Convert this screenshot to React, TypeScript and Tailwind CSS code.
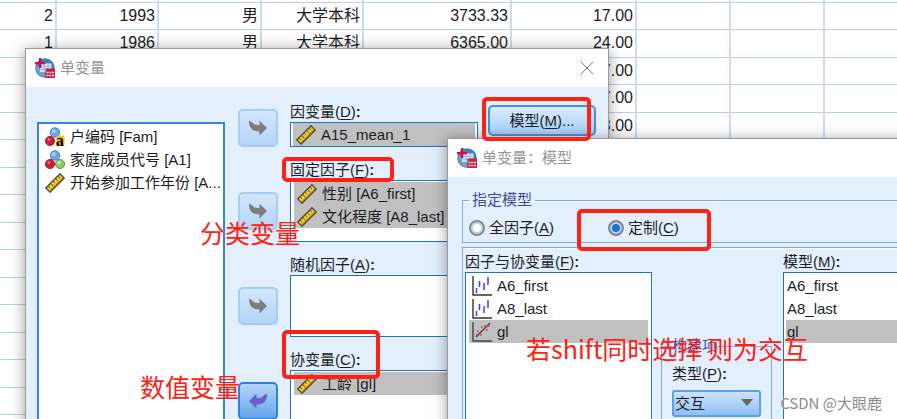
import { useState } from "react";
import type { ReactNode } from "react";

type IconName = "nominalText" | "nominal" | "scale" | "factor" | "covariate";
type Item = { icon?: IconName; label: string; selected?: boolean };

const rows: string[][] = [
  ["", "", "", "", "", ""],
  ["2", "1993", "男", "大学本科", "3733.33", "17.00"],
  ["1", "1986", "男", "大学本科", "6365.00", "24.00"],
  ["", "", "", "", "", "27.00"],
  ["", "", "", "", "", "27.00"],
  ["", "", "", "", "", "28.00"],
  ...Array.from({ length: 12 }, () => ["", "", "", "", "", ""]),
];

const variables: Item[] = [
  { icon: "nominalText", label: "户编码 [Fam]" },
  { icon: "nominal", label: "家庭成员代号 [A1]" },
  { icon: "scale", label: "开始参加工作年份 [A..." },
];

const fixedFactors: Item[] = [
  { icon: "scale", label: "性别 [A6_first]", selected: true },
  { icon: "scale", label: "文化程度 [A8_last]", selected: true },
];

const sources: Item[] = [
  { icon: "factor", label: "A6_first" },
  { icon: "factor", label: "A8_last" },
  { icon: "covariate", label: "gl", selected: true },
];

const modelTerms: Item[] = [{ label: "A6_first" }, { label: "A8_last" }, { label: "gl", selected: true }];

function VarIcon({ name }: { name: IconName }) {
  if (name === "scale") {
    return (
      <svg viewBox="0 0 20 20" className="size-5 shrink-0" aria-hidden="true">
        <g transform="rotate(-45 10 10)">
          <rect x="0" y="7" width="20" height="6" fill="#f6cf2c" stroke="#4a473c" strokeWidth="1.3" />
          <path d="M0.500 12h19" stroke="#a87f18" strokeWidth="1" />
          <path d="M3 7.500v2.500M6.500 7.500v3.500M10 7.500v2.500M13.500 7.500v3.500M17 7.500v2.500" stroke="#6b5d2c" strokeWidth="1" />
        </g>
      </svg>
    );
  }
  if (name === "factor") {
    return (
      <svg viewBox="0 0 20 20" className="size-5 shrink-0" aria-hidden="true">
        <path d="M1 0v19h19" fill="none" stroke="#333" strokeWidth="1.4" />
        <path d="M4.5 12v5M7.5 5v6M12 7v7M16 1v8" stroke="#3b3bff" strokeWidth="1.5" />
      </svg>
    );
  }
  if (name === "covariate") {
    return (
      <svg viewBox="0 0 20 20" className="size-5 shrink-0" aria-hidden="true">
        <path d="M1 0v19h19" fill="none" stroke="#444" strokeWidth="1.4" />
        <path d="M4 15 18 1" stroke="#444" strokeWidth="1.4" />
        <path d="M5 9h1.6M9 5h1.6M8 13h1.6M14 8h1.6M12 4h1.6M4 13h1.6M16 4h1.6" stroke="#e33" strokeWidth="1.6" />
      </svg>
    );
  }
  return (
    <svg viewBox="0 0 20 20" className="size-5 shrink-0" aria-hidden="true">
      <circle cx="10" cy="5.5" r="4.8" fill="#6aa5e6" stroke="#3a76bd" strokeWidth="0.8" />
      <circle cx="8.8" cy="4.2" r="2" fill="#a9cef5" />
      <circle cx="5" cy="14" r="4.6" fill="#cf1b36" stroke="#8e1024" strokeWidth="0.8" />
      <circle cx="3.9" cy="12.6" r="1.5" fill="#e8677a" />
      {name === "nominal" ? (
        <>
          <circle cx="15" cy="14" r="4.6" fill="#8ac868" stroke="#4b8f35" strokeWidth="0.8" />
          <circle cx="14" cy="12.8" r="1.8" fill="#c2e6ad" />
        </>
      ) : (
        <>
          <rect x="11.5" y="8.5" width="8" height="10.5" rx="1.5" fill="#f2c418" />
          <text x="10.8" y="18.6" fontSize="16" fontWeight="700" fontFamily="Liberation Serif, serif" fill="#000">
            a
          </text>
        </>
      )}
    </svg>
  );
}

function AppIcon() {
  return (
    <svg viewBox="0 0 20 20" className="size-5 shrink-0" aria-hidden="true">
      <circle cx="10" cy="10" r="9.8" fill="#3f7fbd" />
      <path d="M1.500 8A9.8 9.8 0 0 0 10 19.800V8z" fill="#6ba1d3" />
      <path d="M5 5.500h11.500V14H5z" fill="#d9e9f7" />
      <path d="M5 8.300h11.500M5 11.200h11.500M9 5.500V14M13 5.500V14" stroke="#7fafd9" strokeWidth="0.8" />
      <path d="M3.900 0h2.400v3.900h3.800v2.300H6.300V10H3.900V6.200H0V3.900h3.900z" fill="#d3103a" />
      <rect x="10.500" y="10.500" width="9.500" height="9.500" fill="#c8203f" />
      <path d="M11.500 14.500h7.500M11.500 17.500h7.500" stroke="#fbdfe4" strokeWidth="1.500" strokeDasharray="2 0.750" />
    </svg>
  );
}

function DataGrid() {
  return (
    <table className="w-full table-fixed border-collapse text-base leading-5 text-[#1c1c24]">
      <colgroup>
        <col className="w-[56px]" />
        <col className="w-[102px]" />
        <col className="w-[103px]" />
        <col className="w-[102px]" />
        <col className="w-[148px]" />
        <col className="w-[125px]" />
        <col className="w-[94px]" />
        <col className="w-[94px]" />
        <col />
      </colgroup>
      <tbody>
        {rows.map((row, r) => (
          <tr key={r} className="h-[28px] border-b border-[#b5cfea] first:h-[2px] even:h-[27px]">
            {[...row, "", "", ""].map((cell, c) => (
              <td key={c} className="border-r-2 border-[#cadef2] p-0 pr-[2px] text-right whitespace-nowrap last:border-r-0">
                {cell}
              </td>
            ))}
          </tr>
        ))}
      </tbody>
    </table>
  );
}

function TitleBar({ title, closable }: { title: string; closable?: boolean }) {
  return (
    <header className="flex h-[38px] shrink-0 items-center gap-[5px] bg-white pr-[14px] pl-[9px]">
      <AppIcon />
      <h2 className="flex-1 text-[15px] leading-5 text-[#969696]">{title}</h2>
      {closable && (
        <button type="button" aria-label="关闭" className="text-[#777]">
          <svg viewBox="0 0 14 14" className="size-[14px]" fill="none" stroke="currentColor" strokeWidth="1">
            <path d="M1 1l12 12M13 1 1 13" />
          </svg>
        </button>
      )}
    </header>
  );
}

function Caption({ text, hotkey, colon = true }: { text: string; hotkey: string; colon?: boolean }) {
  return (
    <span className="whitespace-nowrap">
      {text}(<u className="underline-offset-2">{hotkey}</u>){colon && <b>:</b>}
    </span>
  );
}

function ItemRow({ item }: { item: Item }) {
  return (
    <li
      role="option"
      aria-selected={!!item.selected}
      className={`flex h-[23px] items-center gap-[5px] whitespace-nowrap ${item.icon ? "pl-[3px]" : "pl-px"} ${
        item.selected ? "bg-[#c0c0c0]" : ""
      }`}
    >
      {item.icon && <VarIcon name={item.icon} />}
      <span>{item.label}</span>
    </li>
  );
}

function MoveButton({ back, label }: { back?: boolean; label: string }) {
  return (
    <button
      type="button"
      aria-label={label}
      className={`flex h-[38px] w-10 shrink-0 items-center justify-center rounded-[5px] border-2 ${
        back
          ? "border-[#2a84d8] bg-gradient-to-b from-[#b5d6fa] to-[#63a5ea] text-[#6560cc]"
          : "border-[#a5cdf3] bg-gradient-to-b from-[#d3e6fc] to-[#b4d5f8] text-[#7d7d7d]"
      }`}
    >
      <svg viewBox="0 0 18 16" className={`h-4 w-[18px] ${back ? "-scale-x-100" : ""}`} fill="currentColor">
        <path d="M0 0.500 4 3c1 1.500 2.500 2 6.500 2V0.500L18 8l-7.500 7.500V11.500C4 11.500 0 9 0 0.500z" />
      </svg>
    </button>
  );
}

type FieldProps = { id: string; text: string; hotkey: string; single?: boolean; back?: boolean; children?: ReactNode };

function Field({ id, text, hotkey, single, back, children }: FieldProps) {
  return (
    <div className="flex items-end gap-3">
      <div className={`flex items-center ${single ? "" : "h-[62px]"}`}>
        <MoveButton back={back} label={`${text} 移动`} />
      </div>
      <div className="min-w-0 flex-1">
        <div id={id} className="h-5">
          <Caption text={text} hotkey={hotkey} />
        </div>
        <ul
          role="listbox"
          aria-labelledby={id}
          className={`border border-[#2272c3] bg-white ${single ? "h-[25px] px-[2px]" : "h-[62px] px-[3px] py-px"}`}
        >
          {children}
        </ul>
      </div>
    </div>
  );
}

function UnivariateDialog() {
  return (
    <section className="absolute top-[48px] -bottom-6 left-[25px] flex w-[584px] flex-col border border-[#9a9a9a] bg-[#e3effc] shadow-[0_2px_14px_rgba(0,0,0,0.4)]">
      <TitleBar title="单变量" closable />
      <div className="flex min-h-0 flex-1 pt-[15px] pl-[11px]">
        <ul
          role="listbox"
          aria-label="变量"
          className="mt-5 w-[188px] shrink-0 border-2 border-[#3a84d2] bg-white py-px pl-[3px]"
        >
          {variables.map((v) => (
            <ItemRow key={v.label} item={v} />
          ))}
        </ul>
        <div className="ml-[13px] flex w-60 shrink-0 flex-col gap-[13px]">
          <Field id="dependent" text="因变量" hotkey="D" single>
            <ItemRow item={{ icon: "scale", label: "A15_mean_1", selected: true }} />
          </Field>
          <Field id="fixed" text="固定因子" hotkey="F">
            {fixedFactors.map((v) => (
              <ItemRow key={v.label} item={v} />
            ))}
          </Field>
          <Field id="random" text="随机因子" hotkey="A" />
          <Field id="covariates" text="协变量" hotkey="C" back>
            <ItemRow item={{ icon: "scale", label: "工龄 [gl]", selected: true }} />
          </Field>
        </div>
        <button
          type="button"
          className="mt-[3px] ml-[10px] h-[31px] w-[108px] self-start rounded-[5px] border-2 border-[#3d93df] bg-gradient-to-b from-[#dcebfd] to-[#a4cdf7]"
        >
          模型(<u className="underline-offset-2">M</u>)...
        </button>
      </div>
    </section>
  );
}

type RadioProps = { text: string; hotkey: string; checked: boolean; onSelect: () => void };

function Radio({ text, hotkey, checked, onSelect }: RadioProps) {
  return (
    <label className="flex items-center gap-1">
      <input
        type="radio"
        name="model-type"
        checked={checked}
        onChange={onSelect}
        className="size-4 appearance-none rounded-full border-2 border-[#83898f] bg-white shadow-[inset_0_0_0_2px_#bcd6ee] checked:bg-[#2272c8]"
      />
      <Caption text={text} hotkey={hotkey} colon={false} />
    </label>
  );
}

function ModelDialog() {
  const [modelType, setModelType] = useState("custom");
  const [term, setTerm] = useState("interaction");

  return (
    <section className="absolute top-[138px] -right-6 -bottom-6 left-[447px] flex flex-col border border-[#9a9a9a] bg-[#e3effc] shadow-[0_2px_14px_rgba(0,0,0,0.4)]">
      <TitleBar title="单变量：模型" />
      <div className="flex min-h-0 flex-1 flex-col gap-1 px-[14px] pt-[13px]">
        <fieldset className="border border-[#7fadd9] px-[6px] pt-2 pb-1 shadow-[inset_0_1px_0_#fff]">
          <legend className="px-[3px] leading-5 text-[#4148a0]">指定模型</legend>
          <div className="flex">
            <div className="w-[139px]">
              <Radio text="全因子" hotkey="A" checked={modelType === "full"} onSelect={() => setModelType("full")} />
            </div>
            <Radio text="定制" hotkey="C" checked={modelType === "custom"} onSelect={() => setModelType("custom")} />
          </div>
        </fieldset>

        <div className="flex min-h-0 flex-1 border border-[#7fadd9] pt-1 pl-[2px] shadow-[inset_0_1px_0_#fff]">
          <div className="flex w-[187px] shrink-0 flex-col">
            <div id="sources" className="h-5">
              <Caption text="因子与协变量" hotkey="F" />
            </div>
            <ul role="listbox" aria-labelledby="sources" className="flex-1 border border-[#2272c3] bg-white px-[3px] py-px">
              {sources.map((v) => (
                <ItemRow key={v.label} item={v} />
              ))}
            </ul>
          </div>

          <fieldset className="mt-[84px] ml-[9px] w-[111px] shrink-0 border border-[#7fadd9] px-[10px] pt-2">
            <legend className="leading-5 text-[#4148a0]">构建项</legend>
            <label htmlFor="term" className="block h-5">
              <Caption text="类型" hotkey="P" />
            </label>
            <div className="relative mt-[6px]">
              <select
                id="term"
                value={term}
                onChange={(e) => setTerm(e.target.value)}
                className="h-[27px] w-full appearance-none rounded-[3px] border-2 border-[#55a3ea] bg-gradient-to-b from-[#cfe3fb] to-[#8fc0f3] pl-px"
              >
                <option value="interaction">交互</option>
                <option value="main">主效应</option>
              </select>
              <svg viewBox="0 0 12 7" className="pointer-events-none absolute top-[9px] right-[8px] h-[7px] w-3">
                <path d="M0 0h12L6 7z" fill="#666" />
              </svg>
            </div>
          </fieldset>

          <div className="ml-[11px] flex min-w-0 flex-1 flex-col">
            <div id="terms" className="h-5">
              <Caption text="模型" hotkey="M" />
            </div>
            <ul role="listbox" aria-labelledby="terms" className="flex-1 border border-[#2272c3] bg-white px-[2px] py-px">
              {modelTerms.map((v) => (
                <ItemRow key={v.label} item={v} />
              ))}
            </ul>
          </div>
        </div>
      </div>
    </section>
  );
}

function Note({ className, children }: { className: string; children: ReactNode }) {
  return (
    <p
      className={`pointer-events-none absolute font-['Noto_Sans_CJK_SC',sans-serif] text-[25px] leading-8 whitespace-nowrap text-[#ff2010] ${className}`}
    >
      {children}
    </p>
  );
}

function Highlight({ className }: { className: string }) {
  return <div className={`pointer-events-none absolute rounded-[5px] border-4 border-[#ff2214] ${className}`} />;
}

export default function App() {
  return (
    <main className="relative h-screen overflow-hidden bg-white font-['Liberation_Sans','Noto_Sans_CJK_SC',sans-serif] text-[15px] leading-5 text-[#1c1c24]">
      <DataGrid />
      <UnivariateDialog />
      <ModelDialog />

      <Highlight className="top-[97px] left-[482px] h-[44px] w-[109px]" />
      <Highlight className="top-[157px] left-[282px] h-[25px] w-[112px]" />
      <Highlight className="top-[330px] left-[282px] h-[49px] w-[98px]" />
      <Highlight className="top-[209px] left-[577px] h-[42px] w-[134px]" />

      <Note className="top-[216px] left-[200px]">分类变量</Note>
      <Note className="top-[370px] left-[140px]">数值变量</Note>
      <Note className="top-[332px] left-[526px]">若shift同时选择 则为交互</Note>

      <p className="absolute right-[15px] bottom-[6px] font-['Noto_Sans_CJK_SC',sans-serif] text-[#8c8c8c] [text-shadow:0_0_2px_#fff]">
        CSDN @大眼鹿
      </p>
    </main>
  );
}
